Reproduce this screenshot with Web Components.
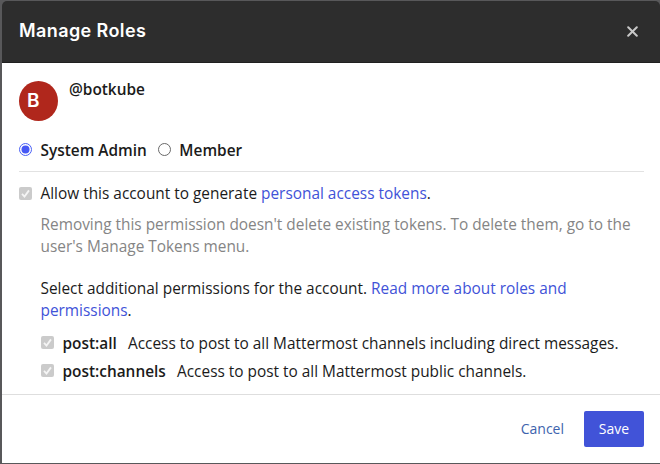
<!DOCTYPE html>
<html lang="en">
<head>
<meta charset="utf-8">
<title>Manage Roles</title>
<style>
html,body{margin:0;height:100%;overflow:hidden;background:#58585a}
body{font:15.4px/22px "Open Sans","Noto Sans",sans-serif;color:#1b1b1b}
</style>
</head>
<body>
<roles-dialog></roles-dialog>
<script>
const define = (name, html) => {
  const t = document.createElement('template');
  t.innerHTML = html;
  customElements.define(name, class extends HTMLElement {
    constructor() {
      super();
      this.attachShadow({ mode: 'open' }).append(t.content.cloneNode(true));
    }
  });
};

define('dialog-header', `<style>
:host{display:flex;box-sizing:border-box;height:62px;align-items:center;justify-content:space-between;padding:0 22px 2px 17px;background:#2d2d2d;color:#fff;border-bottom:1px solid #202020;border-radius:5px 5px 0 0}
h1{margin:1px 0 0;font:600 18px/24px Inter,"Open Sans",sans-serif;letter-spacing:.4px}
svg{display:block;margin-top:2px}
</style><h1><slot></slot></h1>
<svg width="11" height="11" viewBox="0 0 11 11" fill="none" stroke="#c8c8c8" stroke-width="2" stroke-linecap="round"><path d="M1.2 1.2l8.6 8.6M9.8 1.2L1.2 9.8"/></svg>`);

define('user-avatar', `<style>
:host{display:flex;box-sizing:border-box;width:39px;height:40px;border-radius:50%;background:#b0271c;color:#fff;align-items:center;padding-left:8px;font:600 19px/20px Inter,"Open Sans",sans-serif}
</style><slot></slot>`);

define('user-row', `<style>
:host{display:flex;gap:11px;font-weight:600;height:40px}
.name{margin-top:-2px;line-height:22px}
</style><slot name="avatar"></slot><div class="name"><slot></slot></div>`);

define('radio-option', `<style>
:host{display:flex;align-items:flex-start;font-weight:600;gap:8.5px}
svg{display:block;margin-top:3px}
circle{fill:#fff;stroke:#696969;stroke-width:1}
.dot{display:none}
:host([checked]) circle{stroke:#4a60f5}
:host([checked]) .dot{display:block;fill:#4658f5;stroke:none}
</style><svg width="13" height="13" viewBox="0 0 13 13"><circle cx="6.5" cy="6.5" r="6"/><circle class="dot" cx="6.5" cy="6.5" r="4"/></svg><span><slot></slot></span>`);

define('check-option', `<style>
:host{display:flex;gap:8.5px;line-height:22px}
svg{display:block;flex:none;margin-top:var(--box-top,3px)}
.text{white-space:nowrap}
::slotted(b){font-weight:600;margin-right:11.2px}
</style><svg width="13" height="13" viewBox="0 0 13 13"><rect width="13" height="13" rx="2" fill="#cbcbcb"/><path d="M3 6.8l2.5 2.7L10 3.4" fill="none" stroke="#f5f5f5" stroke-width="1.8"/></svg><div class="text"><slot></slot></div>`);

define('dialog-button', `<style>
:host{display:flex;align-items:center;justify-content:center;box-sizing:border-box;height:36px;font-size:14px;line-height:20px;color:#3d63ad}
:host([primary]){width:60px;background:#4153d8;color:#fff;border-radius:2px}
</style><slot></slot>`);

define('roles-dialog', `<style>
:host{display:grid;box-sizing:border-box;height:464px;grid-template-rows:62px 331px 1fr;padding:1px 0 1px 2px}
main{background:#fff;padding:18px 16px 0 17px;box-sizing:border-box;display:flex;flex-direction:column}
.radios{display:flex;gap:11px;height:22px;margin-top:19px}
hr{border:0;height:1px;background:#e2e2e2;margin:9px 0 11px;flex:none;width:100%}
hr + check-option{--box-top:4px}
.note,.more{margin:0 0 0 21.5px;white-space:nowrap}
.note{color:#858585;margin-top:9px}
.more{margin-top:20px}
.perms{display:flex;flex-direction:column;gap:6px;margin:11px 0 0 22px}
a{color:#4153d8;text-decoration:none}
footer{background:#fff;border-top:1px solid #dedede;display:flex;justify-content:flex-end;align-items:flex-start;gap:20px;padding:16px 16px 0}
</style>
<dialog-header>Manage Roles</dialog-header>
<main>
<user-row><user-avatar slot="avatar">B</user-avatar>@botkube</user-row>
<div class="radios"><radio-option checked>System Admin</radio-option><radio-option>Member</radio-option></div>
<hr>
<check-option>Allow this account to generate <a href="#">personal access tokens</a>.</check-option>
<p class="note">Removing this permission doesn't delete existing tokens. To delete them, go to the<br>user's Manage Tokens menu.</p>
<p class="more">Select additional permissions for the account. <a href="#">Read more about roles and<br>permissions</a>.</p>
<div class="perms">
<check-option><b>post:all</b>Access to post to all Mattermost channels including direct messages.</check-option>
<check-option><b>post:channels</b>Access to post to all Mattermost public channels.</check-option>
</div>
</main>
<footer><dialog-button>Cancel</dialog-button><dialog-button primary>Save</dialog-button></footer>`);
</script>
</body>
</html>
